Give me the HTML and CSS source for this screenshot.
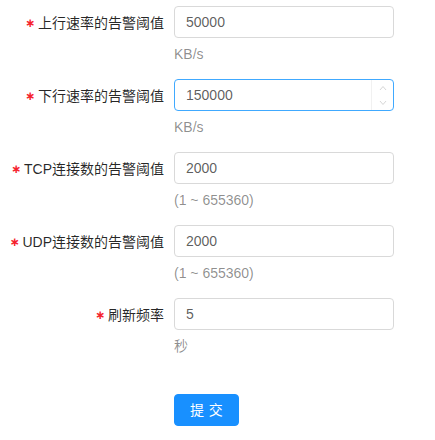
FILE: index.html
```html
<!DOCTYPE html>
<html lang="zh-CN">
<head>
    <meta charset="UTF-8">
    <title>告警设置</title>
    <link rel="stylesheet" href="styles.css">
</head>
<body>

    <form class="alarm-form">
        <!-- Upload speed -->
        <div class="form-item">
            <label class="form-label required">上行速率的告警阈值</label>
            <div class="form-control">
                <div class="number-input">
                    <input type="text" value="50000">
                </div>
                <div class="form-extra">KB/s</div>
            </div>
        </div>

        <!-- Download speed -->
        <div class="form-item">
            <label class="form-label required">下行速率的告警阈值</label>
            <div class="form-control">
                <div class="number-input focused">
                    <input type="text" value="150000">
                    <div class="handler-wrap">
                        <span class="handler">
                            <svg width="8" height="6" viewBox="0 0 8 6"><path d="M1 5 L4 1.5 L7 5" fill="none" stroke="#8c8c8c" stroke-width="1"/></svg>
                        </span>
                        <span class="handler">
                            <svg width="8" height="6" viewBox="0 0 8 6"><path d="M1 1 L4 4.5 L7 1" fill="none" stroke="#8c8c8c" stroke-width="1"/></svg>
                        </span>
                    </div>
                </div>
                <div class="form-extra">KB/s</div>
            </div>
        </div>

        <!-- TCP connections -->
        <div class="form-item">
            <label class="form-label required">TCP连接数的告警阈值</label>
            <div class="form-control">
                <div class="number-input">
                    <input type="text" value="2000">
                </div>
                <div class="form-extra">(1 ~ 655360)</div>
            </div>
        </div>

        <!-- UDP connections -->
        <div class="form-item">
            <label class="form-label required">UDP连接数的告警阈值</label>
            <div class="form-control">
                <div class="number-input">
                    <input type="text" value="2000">
                </div>
                <div class="form-extra">(1 ~ 655360)</div>
            </div>
        </div>

        <!-- Refresh rate -->
        <div class="form-item">
            <label class="form-label required">刷新频率</label>
            <div class="form-control">
                <div class="number-input">
                    <input type="text" value="5">
                </div>
                <div class="form-extra">秒</div>
            </div>
        </div>

        <div class="form-item submit-row">
            <div class="form-label"></div>
            <div class="form-control">
                <button type="button" class="btn-primary"><span>提交</span></button>
            </div>
        </div>
    </form>

</body>
</html>
```

FILE: styles.css
```css
/* Global Styles */
* {
    margin: 0;
    padding: 0;
    box-sizing: border-box;
}

body {
    font-family: "Liberation Sans", Arial, "Noto Sans CJK SC", sans-serif;
    font-size: 14px;
    color: rgba(0, 0, 0, 0.65);
    background: #fff;
}

.alarm-form {
    padding-top: 2px;
}

/* Form rows */
.form-item {
    display: grid;
    grid-template-columns: 174px 220px;
    align-items: start;
    margin-bottom: 10px;
}

.form-label {
    height: 40px;
    display: flex;
    align-items: center;
    justify-content: flex-end;
    padding-right: 10px;
    color: rgba(0, 0, 0, 0.85);
    white-space: nowrap;
}

.form-label.required::before {
    content: "∗";
    margin-right: 3px;
    margin-top: 2px;
    color: #f5222d;
    font-family: "DejaVu Sans", sans-serif;
    font-size: 12px;
    line-height: 1;
    font-weight: bold;
}

.form-control {
    display: flex;
    flex-direction: column;
    padding-top: 4px;
}

/* Number inputs */
.number-input {
    position: relative;
    height: 32px;
    border: 1px solid #d9d9d9;
    border-radius: 4px;
    background: #fff;
}

.number-input input {
    display: block;
    width: 100%;
    height: 30px;
    padding: 0 11px;
    border: none;
    outline: none;
    background: transparent;
    font-family: inherit;
    font-size: 14px;
    line-height: normal;
    color: rgba(0, 0, 0, 0.65);
}

.number-input.focused {
    border-color: #40a9ff;
}

.handler-wrap {
    position: absolute;
    top: 0;
    right: 0;
    width: 22px;
    height: 100%;
    display: flex;
    flex-direction: column;
    border-left: 1px solid #d9d9d9;
    opacity: 0.35;
}

.handler {
    flex: 1;
    display: flex;
    align-items: center;
    justify-content: center;
}

.form-extra {
    height: 21px;
    margin-top: 6px;
    line-height: 21px;
    color: rgba(0, 0, 0, 0.45);
}

/* Submit button */
.submit-row {
    margin-top: 33px;
}

.btn-primary {
    width: 65px;
    height: 32px;
    border: 1px solid #1890ff;
    border-radius: 4px;
    background-color: #1890ff;
    color: #fff;
    font-family: inherit;
    font-size: 14px;
    line-height: 30px;
    cursor: pointer;
}

.btn-primary span {
    letter-spacing: 0.34em;
    margin-right: -0.34em;
}
```
